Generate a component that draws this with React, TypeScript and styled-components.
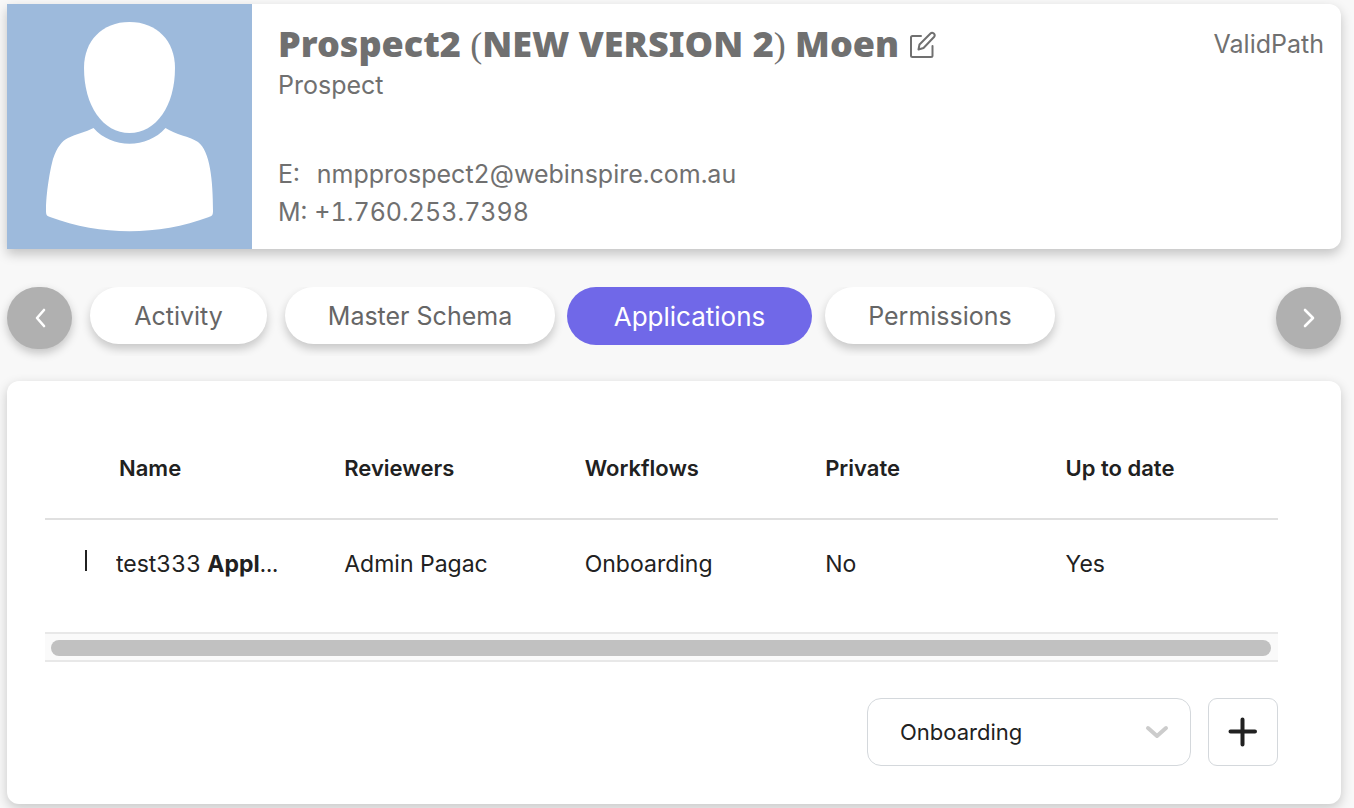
import React from "react";
import styled, { createGlobalStyle } from "styled-components";

const GlobalStyle = createGlobalStyle`
  *, *::before, *::after { box-sizing: border-box; }
  body {
    margin: 0;
    background: #f8f8f8;
    color: #212121;
    font-family: Inter, "Liberation Sans", sans-serif;
  }
  button, select { font: inherit; color: inherit; }
`;

const Page = styled.main`
  display: flex;
  flex-direction: column;
  padding: 4px 13px 4px 7px;
`;

const ProfileCard = styled.header`
  display: flex;
  min-height: 245px;
  overflow: hidden;
  border-radius: 0 12px 12px 0;
  background: #fff;
  color: #707070;
  box-shadow: 0 5px 12px rgba(0, 0, 0, 0.22);
  font-size: 25px;
  font-variant-numeric: tabular-nums;
`;

const Photo = styled.svg`
  flex: none;
  width: 245px;
  height: 245px;
  background: #9dbadc;
`;

const Details = styled.div`
  flex: 1;
  padding: 18px 0 0 26px;
`;

const TitleRow = styled.div`
  display: flex;
  align-items: center;
  gap: 11px;
  height: 44px;
`;

const Title = styled.h1`
  margin: 0;
  font: 900 36px/44px "Noto Sans", sans-serif;
`;

const Paren = styled.span`
  font-family: "Liberation Serif", serif;
  font-weight: 400;
`;

const EditButton = styled.button`
  display: flex;
  padding: 2px 0 0;
  border: 0;
  background: none;
  cursor: pointer;
`;

const Role = styled.p`
  margin: 0 0 51px;
  line-height: 38px;
`;

const Contact = styled.p`
  display: flex;
  gap: ${(p: { $gap: number }) => p.$gap}px;
  margin: 0;
  line-height: 38px;
`;

const ContactLink = styled.a`
  color: inherit;
  text-decoration: none;
`;

const Company = styled.div`
  padding: 21px 17px 0 0;
  line-height: 38px;
`;

const TabBar = styled.nav`
  display: flex;
  align-items: flex-start;
  margin-top: 38px;
`;

const ArrowButton = styled.button`
  display: flex;
  flex: none;
  align-items: center;
  justify-content: center;
  width: 65px;
  height: 62px;
  padding: 0;
  border: 0;
  border-radius: 32px;
  background: #b0b0b0;
  color: #fff;
  box-shadow: 0 4px 10px rgba(0, 0, 0, 0.22);
  cursor: pointer;
`;

const TabList = styled.div`
  display: flex;
  flex: 1;
  gap: 18px;
  height: 69px;
  margin-bottom: 1px;
  padding: 0 18px;
  overflow: hidden;
`;

const Tab = styled.button<{ $active?: boolean; $width: number }>`
  flex: none;
  width: ${(p) => p.$width}px;
  height: ${(p) => (p.$active ? 58 : 57)}px;
  margin: ${(p) => (p.$active ? "0 -5px 0 -6px" : "0")};
  padding: 0;
  border: 0;
  border-radius: 30px;
  background: ${(p) => (p.$active ? "#7068e8" : "#fff")};
  color: ${(p) => (p.$active ? "#fff" : "#666")};
  box-shadow: ${(p) => (p.$active ? "none" : "0 5px 10px rgba(0, 0, 0, 0.2)")};
  font-size: ${(p) => (p.$active ? 26 : 25)}px;
  cursor: pointer;
`;

const Panel = styled.section`
  margin-top: 24px;
  padding: 38px 63px 38px 38px;
  border-radius: 12px;
  background: #fff;
  box-shadow: 0 4px 12px rgba(0, 0, 0, 0.2);
`;

const Table = styled.table`
  width: 100%;
  border-collapse: separate;
  border-spacing: 0;
  table-layout: fixed;
  text-align: left;
`;

const NameCol = styled.col`
  width: 22%;
`;

const HeadCell = styled.th<{ $first?: boolean }>`
  height: 101px;
  padding: 0 0 2px ${(p) => (p.$first ? 74 : 28)}px;
  border-bottom: 2px solid #e0e0e0;
  font-size: 22px;
  font-weight: 600;
`;

const Cell = styled.td<{ $first?: boolean }>`
  height: 112px;
  padding: 0 0 24px ${(p) => (p.$first ? 40 : 28)}px;
  font-size: 23px;
`;

const NameContent = styled.div`
  display: flex;
  align-items: flex-start;
  gap: 29px;
`;

const Handle = styled.span`
  width: 2px;
  height: 21px;
  background: #212121;
`;

const Name = styled.span`
  flex: 1;
  margin-right: 28px;
  overflow: hidden;
  font-variant-numeric: tabular-nums;
  text-overflow: ellipsis;
  white-space: nowrap;
`;

const Track = styled.div`
  padding: 6px 7px 4px 6px;
  border: solid #e8e8e8;
  border-width: 2px 0;
  background: #fafafa;
`;

const Thumb = styled.div`
  height: 16px;
  border-radius: 8px;
  background: #c1c1c1;
`;

const Actions = styled.div`
  display: flex;
  justify-content: flex-end;
  gap: 17px;
  margin-top: 36px;
`;

const SelectBox = styled.div`
  display: grid;
  align-items: center;
  width: 324px;
  height: 68px;
`;

const Select = styled.select`
  grid-area: 1 / 1;
  width: 100%;
  height: 100%;
  padding: 0 32px;
  border: 1px solid #d4d8dc;
  border-radius: 14px;
  background: #fff;
  font-size: 22px;
  appearance: none;
`;

const SelectArrow = styled.svg`
  grid-area: 1 / 1;
  justify-self: end;
  margin-right: 22px;
  pointer-events: none;
`;

const AddButton = styled.button`
  display: flex;
  align-items: center;
  justify-content: center;
  width: 70px;
  height: 68px;
  padding: 0;
  border: 1px solid #d4d8dc;
  border-radius: 9px;
  background: #fff;
  cursor: pointer;
`;

const tabs = [
  { label: "Activity", width: 177 },
  { label: "Master Schema", width: 270 },
  { label: "Applications", width: 245, active: true },
  { label: "Permissions", width: 230 },
];

const columns = ["Name", "Reviewers", "Workflows", "Private", "Up to date"];

function Arrow({ d }: { d: string }) {
  return (
    <svg width="12" height="20" viewBox="0 0 12 20" fill="none" stroke="currentColor" strokeWidth="2.600" strokeLinecap="round" strokeLinejoin="round" aria-hidden="true">
      <path d={d} />
    </svg>
  );
}

export default function App() {
  return (
    <>
      <GlobalStyle />
      <Page>
        <ProfileCard>
          <Photo viewBox="0 0 245 245" fill="#fff" role="img" aria-label="Profile photo">
            <path d="M122.500 18C150 18 168 37 168 64C168 102 149 129 122.500 129C96 129 77 102 77 64C77 37 95 18 122.500 18Z" />
            <path d="M86.500 124C105 145 140 145 158.500 124C169 131 182 132 191 138C203 147 206 176 206 207C206 211 205 212 202 213C151 232 94 232 43 213C40 212 39 211 39 207C39 189 43 166 46 155C50 143 55 137 61 134C69 130 79 128 86.500 124Z" />
          </Photo>
          <Details>
            <TitleRow>
              <Title>
                Prospect2 <Paren>(</Paren>NEW VERSION 2<Paren>)</Paren> Moen
              </Title>
              <EditButton aria-label="Edit name">
                <svg width="26" height="28" viewBox="0 0 26 28" fill="none" stroke="currentColor" strokeWidth="2" strokeLinecap="round" strokeLinejoin="round" aria-hidden="true">
                  <path d="M11 5H2.500Q1 5 1 6.500V24.500Q1 26 2.500 26H21Q22.500 26 22.500 24.500V15" />
                  <path d="M8.500 18.500L9.500 13.500L20.500 2.500Q22 1 23.800 2.500Q25.500 4.200 24 6L13.500 17Z" />
                </svg>
              </EditButton>
            </TitleRow>
            <Role>Prospect</Role>
            <Contact $gap={17}>
              <span>E:</span>
              <ContactLink href="mailto:nmpprospect2@webinspire.com.au">nmpprospect2@webinspire.com.au</ContactLink>
            </Contact>
            <Contact $gap={7}>
              <span>M:</span>
              <span>+1.760.253.7398</span>
            </Contact>
          </Details>
          <Company>ValidPath</Company>
        </ProfileCard>

        <TabBar>
          <ArrowButton aria-label="Previous tabs">
            <Arrow d="M10 2L3 10L10 18" />
          </ArrowButton>
          <TabList>
            {tabs.map((t) => (
              <Tab key={t.label} $active={t.active} $width={t.width}>
                {t.label}
              </Tab>
            ))}
          </TabList>
          <ArrowButton aria-label="Next tabs">
            <Arrow d="M2 2L10 10L2 18" />
          </ArrowButton>
        </TabBar>

        <Panel>
          <Table>
            <colgroup>
              <NameCol />
              <col span={4} />
            </colgroup>
            <thead>
              <tr>
                {columns.map((c, i) => (
                  <HeadCell key={c} $first={i === 0} scope="col">
                    {c}
                  </HeadCell>
                ))}
              </tr>
            </thead>
            <tbody>
              <tr>
                <Cell $first>
                  <NameContent>
                    <Handle />
                    <Name>
                      test333 <b>Appl</b>...
                    </Name>
                  </NameContent>
                </Cell>
                <Cell>Admin Pagac</Cell>
                <Cell>Onboarding</Cell>
                <Cell>No</Cell>
                <Cell>Yes</Cell>
              </tr>
            </tbody>
          </Table>
          <Track>
            <Thumb />
          </Track>
          <Actions>
            <SelectBox>
              <Select aria-label="Workflow" defaultValue="Onboarding">
                <option>Onboarding</option>
              </Select>
              <SelectArrow width="24" height="16" viewBox="0 0 24 16" fill="none" stroke="#ccc" strokeWidth="4" strokeLinecap="round" strokeLinejoin="round" aria-hidden="true">
                <path d="M3 4L12 12L21 4" />
              </SelectArrow>
            </SelectBox>
            <AddButton aria-label="Add application">
              <svg width="30" height="30" viewBox="0 0 30 30" fill="none" stroke="#212121" strokeWidth="4" strokeLinecap="round" aria-hidden="true">
                <path d="M14.500 2.500V27.500M2.500 14.500H27" />
              </svg>
            </AddButton>
          </Actions>
        </Panel>
      </Page>
    </>
  );
}
